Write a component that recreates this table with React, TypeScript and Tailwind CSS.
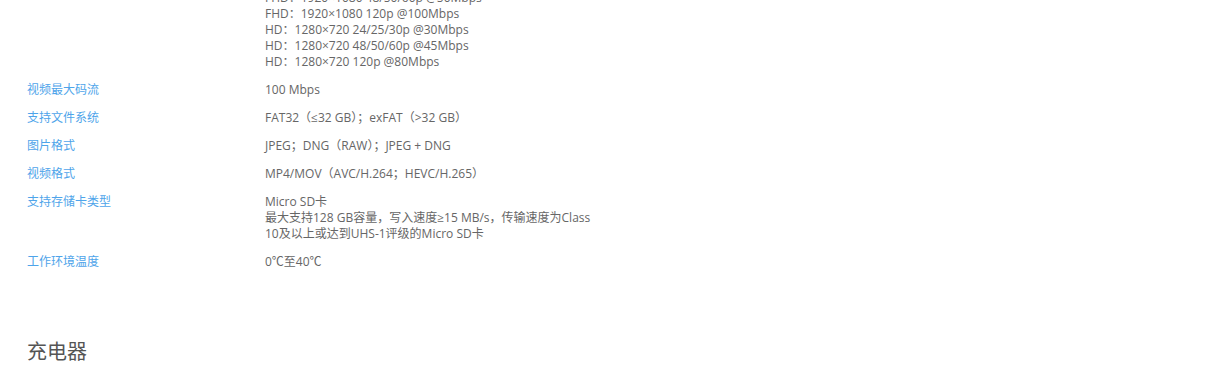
import React from 'react';

const specs: { label: string; lines: string[] }[] = [
  {
    label: '视频分辨率',
    lines: [
      '4K：3840×2160 24/25/30p @100Mbps',
      '4K：3840×2160 48/50/60p @100Mbps',
      'FHD：1920×1080 24/25/30p @40Mbps',
      'FHD：1920×1080 48/50/60p @50Mbps',
      'FHD：1920×1080 120p @100Mbps',
      'HD：1280×720 24/25/30p @30Mbps',
      'HD：1280×720 48/50/60p @45Mbps',
      'HD：1280×720 120p @80Mbps',
    ],
  },
  { label: '视频最大码流', lines: ['100 Mbps'] },
  { label: '支持文件系统', lines: ['FAT32（≤32 GB）；exFAT（>32 GB）'] },
  { label: '图片格式', lines: ['JPEG；DNG（RAW）；JPEG + DNG'] },
  { label: '视频格式', lines: ['MP4/MOV（AVC/H.264；HEVC/H.265）'] },
  {
    label: '支持存储卡类型',
    lines: [
      'Micro SD卡',
      '最大支持128 GB容量，写入速度≥15 MB/s，传输速度为Class',
      '10及以上或达到UHS-1评级的Micro SD卡',
    ],
  },
  { label: '工作环境温度', lines: ['0℃至40℃'] },
];

export default function App() {
  return (
    <div
      className="h-[369px] overflow-hidden bg-white"
      style={{ fontFamily: '"Open Sans", "Noto Sans CJK SC", sans-serif' }}
    >
      <div className="pl-[27px] -mt-[58px]">
        {specs.map((row) => (
          <div key={row.label} className="flex mb-3 text-[12px] leading-4">
            <div className="w-[238px] shrink-0 text-[#4ea4ea]">{row.label}</div>
            <div className="text-[#666]">
              {row.lines.map((l) => (
                <div key={l}>{l}</div>
              ))}
            </div>
          </div>
        ))}
        <h3 className="pt-[56px] text-[20px] leading-7 text-[#555] font-normal">充电器</h3>
      </div>
    </div>
  );
}
